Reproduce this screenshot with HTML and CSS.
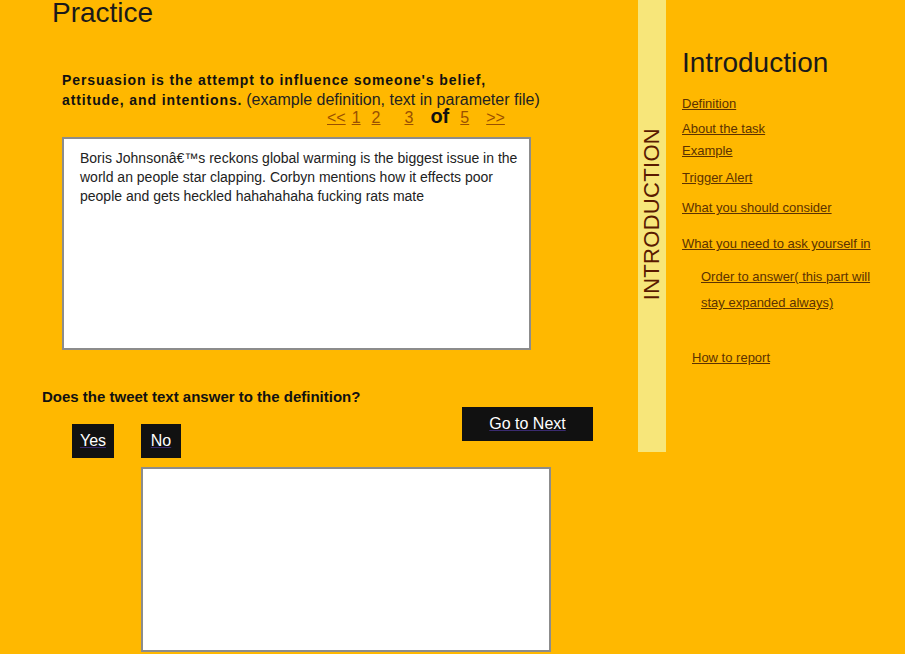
FILE: index.html
```html
<!DOCTYPE html>
<html lang="en">
<head>
<meta charset="utf-8">
<title>Practice</title>
<link rel="stylesheet" href="styles.css">
</head>
<body>
<div class="page">
  <main class="main">
    <h1 class="title">Practice</h1>
    <p class="definition"><b>Persuasion is the attempt to influence someone's belief, attitude, and intentions.</b> <span class="def-note">(example definition, text in parameter file)</span></p>
    <div class="pager">
      <a href="#" class="pg">&lt;&lt;</a>
      <a href="#" class="pg g6">1</a>
      <a href="#" class="pg g11">2</a>
      <a href="#" class="pg g24">3</a>
      <span class="of g17">of</span>
      <a href="#" class="pg g11">5</a>
      <a href="#" class="pg g17">&gt;&gt;</a>
    </div>
    <div class="tweet">Boris Johnsonâ€™s reckons global warming is the biggest issue in the world an people star clapping. Corbyn mentions how it effects poor people and gets heckled hahahahaha fucking rats mate</div>
    <p class="question">Does the tweet text answer to the definition?</p>
    <div class="actions">
      <a href="#" class="btn btn-yes">Yes</a>
      <a href="#" class="btn btn-no">No</a>
      <a href="#" class="btn btn-next">Go to Next</a>
    </div>
    <div class="answer"></div>
  </main>
  <div class="strip"><span class="strip-label">INTRODUCTION</span></div>
  <aside class="side">
    <h2 class="side-title">Introduction</h2>
    <a href="#" class="nav nav-def">Definition</a>
    <a href="#" class="nav nav-about">About the task</a>
    <a href="#" class="nav nav-example">Example</a>
    <a href="#" class="nav nav-trigger">Trigger Alert</a>
    <a href="#" class="nav nav-consider">What you should consider</a>
    <a href="#" class="nav nav-ask">What you need to ask yourself in</a>
    <a href="#" class="nav nav-order">Order to answer( this part will<br>stay expanded always)</a>
    <a href="#" class="nav nav-report">How to report</a>
  </aside>
</div>
</body>
</html>
```

FILE: styles.css
```css
html, body {
  margin: 0;
  padding: 0;
  background: #ffb800;
  font-family: "Liberation Sans", Arial, sans-serif;
  color: #111;
}

.page {
  display: flex;
  align-items: flex-start;
  height: 654px;
  overflow: hidden;
}

.main {
  width: 638px;
  flex: none;
}

.title {
  margin: 0;
  padding-left: 52px;
  font-size: 28px;
  font-weight: normal;
  line-height: 26px;
  color: #1a1a1a;
}

.definition {
  margin: 44px 0 0 62px;
  width: 486px;
  font-size: 14px;
  line-height: 20px;
  color: #222;
}

.definition b {
  color: #111;
  letter-spacing: 0.9px;
}

.def-note {
  font-size: 16px;
  color: #222;
}

.pager {
  display: flex;
  align-items: baseline;
  margin: -4px 0 0 327px;
  height: 20px;
  line-height: 20px;
  font-size: 16px;
}

.pg {
  color: #9a5000;
  text-decoration: underline;
}

.of {
  font-size: 20px;
  font-weight: bold;
  color: #111;
}

.g6 { margin-left: 6px; }
.g11 { margin-left: 11px; }
.g17 { margin-left: 17px; }
.g24 { margin-left: 24px; }

.tweet {
  box-sizing: border-box;
  margin: 11px 0 0 62px;
  width: 469px;
  height: 213px;
  background: #fff;
  border: 2px solid #8c8c8c;
  padding: 10px 8px 0 16px;
  font-size: 14px;
  line-height: 19px;
  color: #222;
}

.question {
  margin: 38px 0 0 42px;
  font-size: 15px;
  line-height: 18px;
  font-weight: bold;
  color: #111;
}

.actions {
  display: flex;
  align-items: flex-start;
  margin-top: 1px;
  padding: 0 45px 0 72px;
  height: 51px;
}

.btn {
  display: block;
  height: 34px;
  line-height: 34px;
  background: #111;
  color: #fff;
  font-size: 16px;
  text-decoration: underline;
  text-decoration-color: #3a2a70;
  text-align: center;
}

.btn-yes {
  width: 42px;
  margin-top: 17px;
}

.btn-no {
  width: 40px;
  margin-top: 17px;
  margin-left: 27px;
}

.btn-next {
  width: 131px;
  margin-left: auto;
}

.answer {
  box-sizing: border-box;
  margin: 9px 0 0 141px;
  width: 410px;
  height: 185px;
  background: #fff;
  border: 2px solid #8c8c8c;
}

.strip {
  width: 28px;
  height: 452px;
  flex: none;
  background: #f7e67a;
  display: flex;
  justify-content: center;
  align-items: flex-start;
}

.strip-label {
  display: block;
  margin-top: 128px;
  writing-mode: vertical-rl;
  transform: rotate(180deg);
  font-size: 22px;
  letter-spacing: 0.3px;
  line-height: 28px;
  color: #5a1a00;
}

.side {
  flex: 1;
  padding: 0 25px 0 16px;
}

.side-title {
  margin: 47px 0 0 0;
  font-size: 28px;
  font-weight: normal;
  line-height: 32px;
  color: #1a1a1a;
}

.nav {
  display: block;
  font-size: 13px;
  line-height: 16px;
  color: #5c3200;
  text-decoration: underline;
}

.nav-def { margin-top: 17px; }
.nav-about { margin-top: 9px; }
.nav-example { margin-top: 6px; }
.nav-trigger { margin-top: 11px; }
.nav-consider { margin-top: 14px; }
.nav-ask { margin-top: 20px; }
.nav-order {
  margin-top: 12px;
  padding-left: 19px;
  line-height: 26px;
}
.nav-report {
  margin-top: 34px;
  padding-left: 10px;
}
```
